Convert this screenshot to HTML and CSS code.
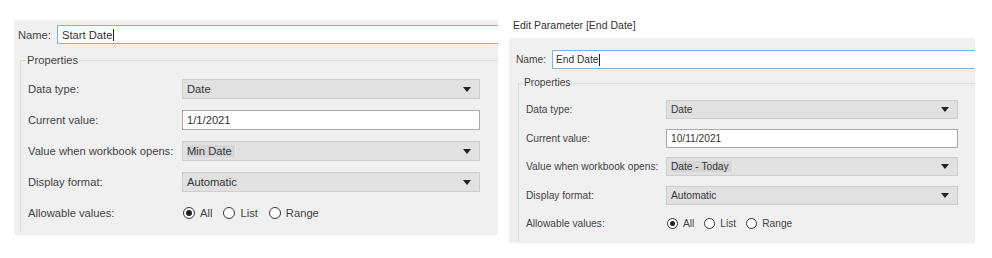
FILE: index.html
```html
<!DOCTYPE html>
<html>
<head>
<meta charset="utf-8">
<link rel="stylesheet" href="styles.css">
</head>
<body>
<div class="page">
  <div class="col col-left">
    <div class="dlg dlg-lg">
      <div class="name-row">
        <span class="name-label">Name:</span>
        <div class="name-input">Start Date<span class="caret"></span></div>
      </div>
      <div class="props">
        <div class="legend">Properties</div>
        <div class="row">
          <span class="lbl">Data type:</span>
          <div class="select"><span class="val">Date</span><span class="arrow"></span></div>
        </div>
        <div class="row">
          <span class="lbl">Current value:</span>
          <div class="text">1/1/2021</div>
        </div>
        <div class="row">
          <span class="lbl">Value when workbook opens:</span>
          <div class="select"><span class="val hl">Min Date</span><span class="arrow"></span></div>
        </div>
        <div class="row">
          <span class="lbl">Display format:</span>
          <div class="select"><span class="val">Automatic</span><span class="arrow"></span></div>
        </div>
        <div class="row">
          <span class="lbl">Allowable values:</span>
          <div class="radios">
            <span class="radio on"></span><span class="rlbl">All</span>
            <span class="radio"></span><span class="rlbl">List</span>
            <span class="radio"></span><span class="rlbl">Range</span>
          </div>
        </div>
      </div>
    </div>
  </div>
  <div class="col col-right">
    <div class="title">Edit Parameter [End Date]</div>
    <div class="dlg dlg-sm">
      <div class="name-row">
        <span class="name-label">Name:</span>
        <div class="name-input">End Date<span class="caret"></span></div>
      </div>
      <div class="props">
        <div class="legend">Properties</div>
        <div class="row">
          <span class="lbl">Data type:</span>
          <div class="select"><span class="val">Date</span><span class="arrow"></span></div>
        </div>
        <div class="row">
          <span class="lbl">Current value:</span>
          <div class="text">10/11/2021</div>
        </div>
        <div class="row">
          <span class="lbl">Value when workbook opens:</span>
          <div class="select"><span class="val hl">Date - Today</span><span class="arrow"></span></div>
        </div>
        <div class="row">
          <span class="lbl">Display format:</span>
          <div class="select"><span class="val">Automatic</span><span class="arrow"></span></div>
        </div>
        <div class="row">
          <span class="lbl">Allowable values:</span>
          <div class="radios">
            <span class="radio on"></span><span class="rlbl">All</span>
            <span class="radio"></span><span class="rlbl">List</span>
            <span class="radio"></span><span class="rlbl">Range</span>
          </div>
        </div>
      </div>
    </div>
  </div>
</div>
</body>
</html>
```

FILE: styles.css
```css
* { box-sizing: border-box; }
html, body { margin: 0; padding: 0; background: #ffffff; }
body {
  width: 992px;
  height: 258px;
  overflow: hidden;
  font-family: "Liberation Sans", Arial, sans-serif;
  color: #444;
}
.page { display: flex; align-items: flex-start; }

.col-left { padding: 20px 0 0 14px; }
.col-right { padding: 0 0 0 11px; }

.title {
  font-size: 10.5px;
  line-height: 14px;
  padding: 18px 0 6px 4px;
  color: #333;
  white-space: nowrap;
}

.dlg {
  background: #f0f0f0;
  display: flex;
  flex-direction: column;
  white-space: nowrap;
}
.dlg-lg { width: 484px; height: 215px; padding: 5px 0 0 4px; font-size: 11.2px; }
.dlg-sm { width: 466px; height: 205px; padding: 12px 0 0 7px; font-size: 10.2px; }

.name-row { display: flex; align-items: center; }
.name-input {
  flex: 1;
  background: #fff;
  border: 1px solid #7db2e8;
  border-right: none;
  display: flex;
  align-items: center;
  color: #333;
}
.dlg-lg .name-row { height: 19px; }
.dlg-lg .name-label { width: 39px; }
.dlg-lg .name-input { height: 19px; padding-left: 4px; }
.dlg-sm .name-row { height: 19px; }
.dlg-sm .name-label { width: 36px; }
.dlg-sm .name-input { height: 19px; padding-left: 3px; }
.caret { display: inline-block; width: 1px; height: 12px; background: #222; margin-left: 1px; }

.props {
  flex: 1;
  border-top: 1px solid #dadada;
  border-left: 1px solid #dadada;
  position: relative;
  display: flex;
  flex-direction: column;
}
.dlg-lg .props { margin: 16px 0 3px 2px; padding: 18px 0 0 7px; gap: 11px; }
.dlg-sm .props { margin: 14px 0 2px 2px; padding: 16px 0 0 7px; gap: 9.5px; }

.legend {
  position: absolute;
  top: -8px;
  background: #f0f0f0;
  padding: 0 1px;
  line-height: 14px;
}
.dlg-lg .legend { left: 5px; }
.dlg-sm .legend { left: 4px; }

.row { display: flex; align-items: center; }
.dlg-lg .row { height: 20px; }
.dlg-sm .row { height: 19px; }
.dlg-lg .lbl { width: 154px; flex: none; }
.dlg-sm .lbl { width: 140px; flex: none; }

.select, .text {
  height: 100%;
  display: flex;
  align-items: center;
  padding-left: 4px;
  color: #333;
}
.dlg-lg .select, .dlg-lg .text { width: 298px; }
.dlg-sm .select, .dlg-sm .text { width: 292px; }
.select {
  background: #e1e1e1;
  border: 1px solid #cdcdcd;
  justify-content: space-between;
}
.text {
  background: #fff;
  border: 1px solid #a9a9a9;
}
.val.hl { background: #d6d6d6; padding-right: 3px; border-right: 1px solid #ebebeb; }
.arrow {
  width: 0; height: 0;
  border-left: 4px solid transparent;
  border-right: 4px solid transparent;
  border-top: 5px solid #222;
  margin-right: 8px;
}

.radios { display: flex; align-items: center; padding-left: 1px; }
.radio {
  width: 12px; height: 12px;
  border-radius: 50%;
  border: 1px solid #333;
  background: #fff;
  position: relative;
  flex: none;
}
.radio.on::after {
  content: "";
  position: absolute;
  left: 2px; top: 2px;
  width: 6px; height: 6px;
  border-radius: 50%;
  background: #222;
}
.rlbl { margin: 0 11px 0 5px; }
.dlg-sm .radio { width: 11px; height: 11px; }
.dlg-sm .radio.on::after { left: 2px; top: 2px; width: 5px; height: 5px; }
.dlg-sm .rlbl { margin: 0 10px 0 5px; }
```
